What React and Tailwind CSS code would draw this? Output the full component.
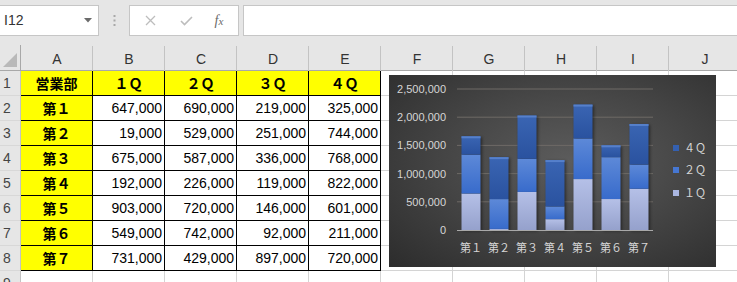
const cols = ['A', 'B', 'C', 'D', 'E', 'F', 'G', 'H', 'I', 'J'];

const table = [
  ['営業部', '１Ｑ', '２Ｑ', '３Ｑ', '４Ｑ'],
  ['第１', '647,000', '690,000', '219,000', '325,000'],
  ['第２', '19,000', '529,000', '251,000', '744,000'],
  ['第３', '675,000', '587,000', '336,000', '768,000'],
  ['第４', '192,000', '226,000', '119,000', '822,000'],
  ['第５', '903,000', '720,000', '146,000', '601,000'],
  ['第６', '549,000', '742,000', '92,000', '211,000'],
  ['第７', '731,000', '429,000', '897,000', '720,000'],
];

const q1 = [647, 19, 675, 192, 903, 549, 731];
const q2 = [690, 529, 587, 226, 720, 742, 429];
const q4 = [325, 744, 768, 822, 601, 211, 720];

const BASE = 155;
const PX = 0.0564; // px per thousand

function Toolbar() {
  return (
    <div className="flex h-[45px] items-start bg-[#e6e6e6] pt-[5px]">
      <div className="flex h-[31px] w-[99px] shrink-0 items-center justify-between border border-l-0 border-[#c6c6c6] bg-white pl-[4px] pr-[6px]">
        <span className="text-[14px] text-[#333]" style={{ fontFamily: '"Liberation Sans", sans-serif' }}>I12</span>
        <svg width="8" height="5" viewBox="0 0 8 5">
          <polygon points="0,0 8,0 4,4.5" fill="#6b6b6b" />
        </svg>
      </div>
      <div className="flex h-[31px] w-[30px] shrink-0 items-center justify-center">
        <svg width="3" height="11" viewBox="0 0 3 11">
          <rect x="0.5" y="0" width="2" height="2" fill="#a8a8a8" />
          <rect x="0.5" y="4.5" width="2" height="2" fill="#a8a8a8" />
          <rect x="0.5" y="9" width="2" height="2" fill="#a8a8a8" />
        </svg>
      </div>
      <div className="flex h-[31px] w-[110px] shrink-0 items-center border border-[#c6c6c6] bg-white">
        <div className="flex w-[40px] justify-center">
          <svg width="11" height="11" viewBox="0 0 11 11">
            <path d="M1 1 L10 10 M10 1 L1 10" stroke="#bdbdbd" strokeWidth="1.3" fill="none" />
          </svg>
        </div>
        <div className="flex w-[32px] justify-center">
          <svg width="13" height="10" viewBox="0 0 13 10">
            <path d="M1 5 L4.5 8.5 L12 1" stroke="#bdbdbd" strokeWidth="1.6" fill="none" />
          </svg>
        </div>
        <div className="flex flex-1 justify-center pr-[2px]">
          <span className="text-[14px] italic text-[#6a6a6a]" style={{ fontFamily: '"Liberation Serif", serif' }}>
            f<span className="text-[11px]">x</span>
          </span>
        </div>
      </div>
      <div className="ml-[4px] h-[31px] flex-1 border border-r-0 border-[#c6c6c6] bg-white" />
    </div>
  );
}

function Sheet() {
  const font = { fontFamily: '"Liberation Sans", "Noto Sans CJK JP", sans-serif' };
  return (
    <div className="grid grid-cols-[21px_repeat(10,72px)]" style={font}>
      <div className="relative h-[26px] border-r border-b border-[#a8a8a8] bg-[#e6e6e6]">
        <svg className="absolute bottom-[3px] right-[3px]" width="14" height="14" viewBox="0 0 14 14">
          <polygon points="14,0 14,14 0,14" fill="#b9b9b9" />
        </svg>
      </div>
      {cols.map((c) => (
        <div
          key={c}
          className="relative flex h-[26px] items-end justify-center border-b border-[#a8a8a8] bg-[#e6e6e6] pb-[4px] text-[14px] leading-none text-[#333]"
        >
          <span className="absolute right-0 top-[1px] h-[25px] w-px bg-[#c3c3c3]" />
          {c}
        </div>
      ))}
      {table.map((row, r) => (
        <Row key={r} n={r + 1} row={row} header={r === 0} />
      ))}
      <div className="flex h-[25px] items-center border-r border-[#c3c3c3] bg-[#e6e6e6] pl-[3px] text-[14px] text-[#444]">9</div>
      {cols.map((c) => (
        <div key={c} className="h-[25px] border-r border-[#d4d4d4] bg-white" />
      ))}
    </div>
  );
}

function Row({ n, row, header }) {
  return (
    <>
      <div className="flex h-[25px] items-center border-r border-b border-[#c3c3c3] border-b-[#d8d8d8] bg-[#e6e6e6] pl-[3px] text-[14px] text-[#444]">
        {n}
      </div>
      {cols.map((c, i) => {
        if (i > 4) {
          return <div key={c} className="h-[25px] border-r border-b border-[#d4d4d4] bg-white" />;
        }
        const yellow = header || i === 0;
        return (
          <div
            key={c}
            className={`flex h-[25px] items-center border-r border-b border-black ${
              yellow ? 'justify-center bg-[#ffff00] font-bold' : 'justify-end bg-white pr-[2px]'
            } text-[14px] text-black`}
            style={yellow ? { fontFamily: '"Noto Sans CJK JP", sans-serif' } : undefined}
          >
            {row[i]}
          </div>
        );
      })}
    </>
  );
}

function Chart() {
  const cat = ['第１', '第２', '第３', '第４', '第５', '第６', '第７'];
  const ticks = ['0', '500,000', '1,000,000', '1,500,000', '2,000,000', '2,500,000'];
  return (
    <div className="absolute left-[389px] top-[75px] h-[192px] w-[327px] bg-[radial-gradient(ellipse_at_55%_45%,#5c5c5c_0%,#474747_45%,#2c2c2c_100%)]">
      <svg width="327" height="192" viewBox="0 0 327 192">
        <defs>
          <linearGradient id="g1" x1="0" y1="0" x2="0" y2="1">
            <stop offset="0" stopColor="#b5c0e7" />
            <stop offset="1" stopColor="#95a1cc" />
          </linearGradient>
          <linearGradient id="g2" x1="0" y1="0" x2="0" y2="1">
            <stop offset="0" stopColor="#5d89d8" />
            <stop offset="1" stopColor="#386bcb" />
          </linearGradient>
          <linearGradient id="g4" x1="0" y1="0" x2="0" y2="1">
            <stop offset="0" stopColor="#3a65b3" />
            <stop offset="1" stopColor="#2a529f" />
          </linearGradient>
          <filter id="sh" x="-30%" y="-10%" width="160%" height="120%">
            <feGaussianBlur stdDeviation="1.5" />
          </filter>
        </defs>
        {ticks.map((t, i) => {
          const y = BASE - 28.2 * i;
          return (
            <g key={t}>
              {i > 0 && <line x1="68" x2="264" y1={y} y2={y} stroke="#6e6a66" strokeWidth="1" />}
              <text
                x="57"
                y={y + 4}
                textAnchor="end"
                fontSize="11"
                fill="#d6d6d6"
                fontFamily='"Liberation Sans", sans-serif'
              >
                {t}
              </text>
            </g>
          );
        })}
        {cat.map((c, i) => {
          const x = 68 + 28 * i + 4.5;
          const h1 = q1[i] * PX;
          const h2 = q2[i] * PX;
          const h4 = q4[i] * PX;
          const top = BASE - h1 - h2 - h4;
          return (
            <g key={c}>
              <rect x={x + 1.5} y={top + 1} width="19" height={BASE - top} fill="#000" opacity="0.45" filter="url(#sh)" />
              <rect x={x} y={BASE - h1} width="19" height={h1} fill="url(#g1)" />
              <rect x={x} y={BASE - h1 - h2} width="19" height={h2} fill="url(#g2)" />
              <rect x={x} y={top} width="19" height={h4} fill="url(#g4)" />
              <rect x={x} y={top} width="19" height="2" fill="#5680cb" />
              <text
                x={x + 9.5}
                y="177"
                textAnchor="middle"
                fontSize="11"
                fill="#d6d6d6"
                fontFamily='"Noto Sans CJK JP", sans-serif'
              >
                {c}
              </text>
            </g>
          );
        })}
        <line x1="68" x2="264" y1={BASE + 0.5} y2={BASE + 0.5} stroke="#a9a9a9" strokeWidth="1" />
        {[
          ['４Ｑ', '#3460b0', 73],
          ['２Ｑ', '#4677d2', 95],
          ['１Ｑ', '#aab6e0', 118],
        ].map(([t, col, y]) => (
          <g key={t}>
            <rect x="284" y={y - 3} width="6" height="6" fill={col} />
            <text x="295" y={y + 4} fontSize="11" fill="#d6d6d6" fontFamily='"Noto Sans CJK JP", sans-serif'>
              {t}
            </text>
          </g>
        ))}
      </svg>
    </div>
  );
}

export default function App() {
  return (
    <div className="relative h-[282px] w-[737px] overflow-hidden bg-white">
      <Toolbar />
      <Sheet />
      <Chart />
    </div>
  );
}
